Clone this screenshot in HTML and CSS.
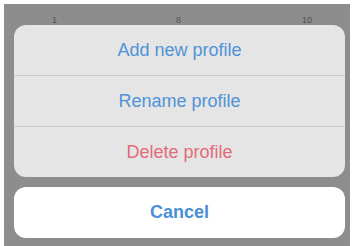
FILE: index.html
```html
<!DOCTYPE html>
<html>
<head>
<meta charset="utf-8">
<link rel="stylesheet" href="styles.css">
</head>
<body>
<div class="overlay">
  <div class="under">
    <span class="n n1">1</span>
    <span class="n n8">8</span>
    <span class="n n10">10</span>
  </div>
  <div class="group">
    <div class="action blue">Add new profile</div>
    <div class="action blue">Rename profile</div>
    <div class="action red">Delete profile</div>
  </div>
  <div class="cancel">Cancel</div>
</div>
</body>
</html>
```

FILE: styles.css
```css
html, body {
  margin: 0;
  padding: 0;
  background: #ffffff;
}
body {
  font-family: "Liberation Sans", Arial, sans-serif;
  width: 353px;
  height: 246px;
  overflow: hidden;
}
.overlay {
  margin: 4px 3px 0 4px;
  height: 242px;
  box-sizing: border-box;
  background: #8d8d8d;
  padding: 0 5px 8px 10px;
  display: flex;
  flex-direction: column;
}
.under {
  height: 21px;
  font-size: 9px;
  color: #505050;
  position: relative;
}
.n {
  position: absolute;
  top: 11px;
}
.n1 { left: 38px; }
.n8 { left: 162px; }
.n10 { left: 288px; }
.group {
  background: #e5e5e5;
  border-radius: 12px;
  display: flex;
  flex-direction: column;
  overflow: hidden;
}
.action {
  height: 50px;
  display: flex;
  align-items: center;
  justify-content: center;
  font-size: 18px;
  border-top: 1px solid #cdcdcd;
}
.action:first-child {
  border-top: none;
}
.blue { color: #4f93d8; }
.red { color: #e26b78; }
.cancel {
  margin-top: 10px;
  height: 51px;
  background: #ffffff;
  border-radius: 12px;
  display: flex;
  align-items: center;
  justify-content: center;
  font-size: 18px;
  font-weight: bold;
  color: #4a8fd6;
}
```
